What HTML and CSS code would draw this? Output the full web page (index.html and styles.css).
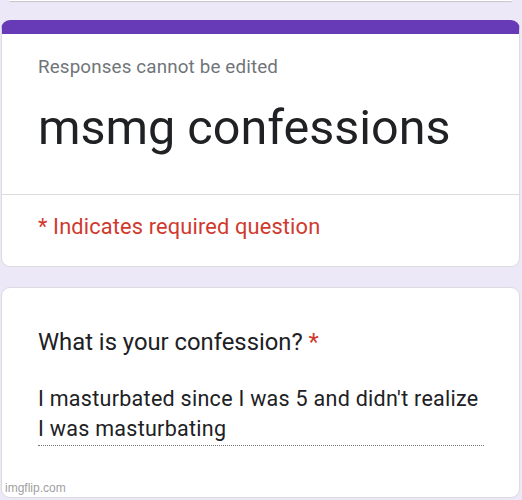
FILE: index.html
```html
<!DOCTYPE html>
<html lang="en">
<head>
    <meta charset="UTF-8">
    <title>msmg confessions</title>
    <link rel="stylesheet" href="styles.css">
</head>
<body>
    <div class="prev-card"></div>

    <div class="card header-card">
        <div class="header-top">
            <div class="note">Responses cannot be edited</div>
            <h1 class="title">msmg confessions</h1>
        </div>
        <div class="required-note">* Indicates required question</div>
    </div>

    <div class="card question-card">
        <div class="question">What is your confession? <span class="star">*</span></div>
        <div class="answer">I masturbated since I was 5 and didn't realize I was masturbating</div>
        <div class="watermark">imgflip.com</div>
    </div>
</body>
</html>
```

FILE: styles.css
```css
* {
    box-sizing: border-box;
}
body {
    margin: 0;
    padding: 0 2px 0 1px;
    background-color: #ede8f7;
    font-family: Roboto, "Liberation Sans", sans-serif;
    color: #202124;
    height: 500px;
    overflow: hidden;
}
.prev-card {
    height: 1px;
    margin: 0 8px;
    background: #fff;
    box-shadow: 0 1px 1px rgba(0,0,0,0.18);
    border-radius: 0 0 6px 6px;
}
.card {
    background: white;
    border-radius: 9px;
    border: 1px solid #dadce0;
}
.header-card {
    margin-top: 19px;
    border-top: 14px solid #673ab7;
    border-color: #673ab7 #dadce0 #dadce0 #dadce0;
}
.header-top {
    padding: 22px 36px 0;
    height: 161px;
    border-bottom: 1px solid #dadce0;
}
.note {
    font-size: 18.8px;
    line-height: 22px;
    color: #70757a;
    letter-spacing: 0.15px;
}
.title {
    margin: 22px 0 0;
    font-size: 48.5px;
    font-weight: 400;
    line-height: 56px;
}
.required-note {
    padding: 18px 36px 25px;
    font-size: 21.8px;
    line-height: 28px;
    letter-spacing: 0.15px;
    color: #cf3a2e;
}
.question-card {
    margin-top: 20px;
    padding: 39px 36px 0;
    height: 211px;
    position: relative;
}
.question {
    font-size: 23.8px;
    line-height: 30px;
}
.star {
    color: #cf3a2e;
}
.answer {
    margin-top: 27px;
    width: 446px;
    font-size: 21.5px;
    line-height: 30px;
    letter-spacing: 0.28px;
    padding-bottom: 1px;
    border-bottom: 1px dotted #70757a;
}
.watermark {
    position: absolute;
    left: 3px;
    bottom: 2px;
    font-family: "Liberation Sans", Arial, sans-serif;
    font-size: 12px;
    color: #a0a0a0;
}
```
